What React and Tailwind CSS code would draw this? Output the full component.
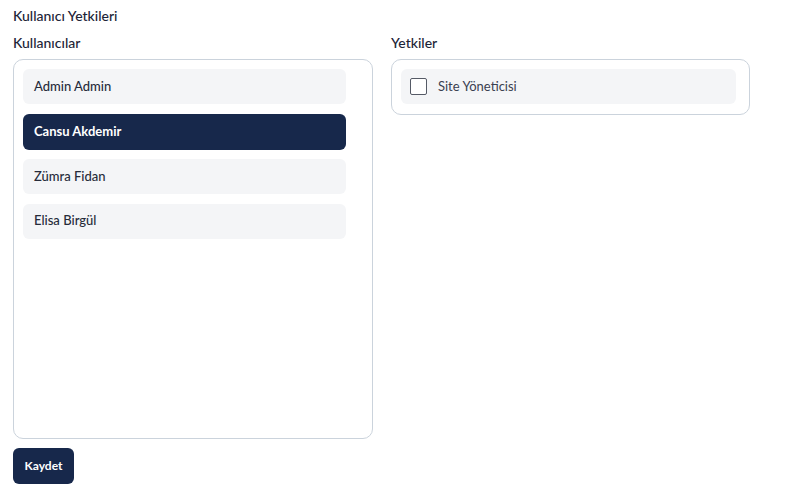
export default function App() {
  const users = ['Admin Admin', 'Cansu Akdemir', 'Zümra Fidan', 'Elisa Birgül'];
  const selected = 'Cansu Akdemir';

  return (
    <div className="min-h-screen bg-white px-[13px] pt-[7px] text-[#1c2437]" style={{ fontFamily: 'Lato, "Noto Sans", sans-serif' }}>
      <h1 className="text-[14px] leading-[18px] font-medium">Kullanıcı Yetkileri</h1>
      <div className="mt-[9px] grid grid-cols-[360px_359px] gap-[18px]">
        <div>
          <h2 className="text-[14px] leading-[18px] font-medium">Kullanıcılar</h2>
          <div className="mt-[7px] h-[380px] rounded-[10px] border border-[#cbd3dc] pl-[9px] pr-[26px] pt-[9px]">
            <div className="flex flex-col gap-[9.5px]">
              {users.map((u) => (
                <div
                  key={u}
                  className={
                    u === selected
                      ? 'h-[36px] rounded-[6px] bg-[#17284b] px-[11px] flex items-center text-[13px] font-bold text-white'
                      : 'h-[35px] rounded-[6px] bg-[#f4f5f7] px-[11px] flex items-center text-[13px] font-medium text-[#262b3a]'
                  }
                >
                  {u}
                </div>
              ))}
            </div>
          </div>
        </div>
        <div>
          <h2 className="text-[14px] leading-[18px] font-medium">Yetkiler</h2>
          <div className="mt-[7px] rounded-[10px] border border-[#cbd3dc] pl-[9px] pr-[13px] pt-[9px] pb-[10px]">
            <label className="h-[35px] rounded-[6px] bg-[#f4f5f7] pl-[9px] flex items-center gap-[11px] text-[13px] text-[#3a4050]">
              <span className="w-[17px] h-[17px] rounded-[2px] border border-[#555a66] bg-white" />
              Site Yöneticisi
            </label>
          </div>
        </div>
      </div>
      <button className="mt-[9px] h-[36px] w-[61px] rounded-[6px] bg-[#17284b] text-white text-[12px] font-bold">
        Kaydet
      </button>
    </div>
  );
}
